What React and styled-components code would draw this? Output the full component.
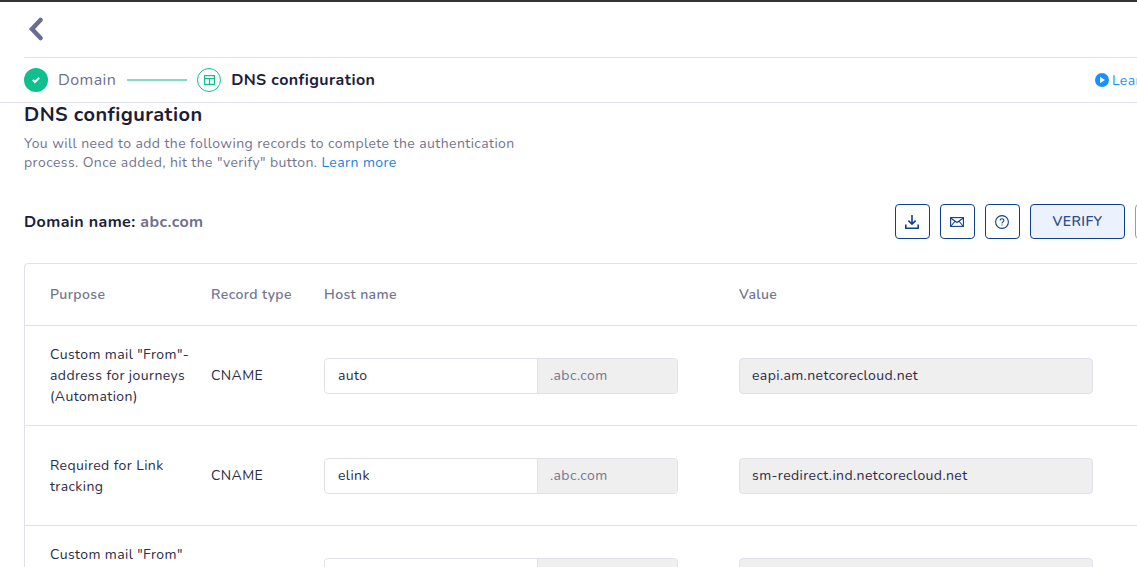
import React from "react"
import styled, { createGlobalStyle } from "styled-components"

const GlobalStyle = createGlobalStyle`
  html, body {
    margin: 0;
    padding: 0;
    height: 100%;
    overflow: hidden;
    background: #fff;
  }
  * { box-sizing: border-box; }
`

const rows = [
  {
    purpose: ['Custom mail "From"-', "address for journeys", "(Automation)"],
    host: "auto",
    value: "eapi.am.netcorecloud.net",
  },
  {
    purpose: ["Required for Link", "tracking"],
    host: "elink",
    value: "sm-redirect.ind.netcorecloud.net",
  },
  {
    purpose: ['Custom mail "From"', "address for campaigns", "(Marketing)"],
    host: "",
    value: "",
  },
]

export default function App() {
  return (
    <Page>
      <GlobalStyle />
      <TopBar>
        <BackIcon width="16" height="24" viewBox="0 0 16 24">
          <path d="M12.500 3 4 12l8.500 9" />
        </BackIcon>
      </TopBar>
      <Stepper>
        <Steps>
          <DoneDot>
            <svg width="10" height="8" viewBox="0 0 10 8">
              <path d="M1.800 4 3.900 6 8.200 1.800" fill="none" stroke="#fff" strokeWidth="2" />
            </svg>
          </DoneDot>
          <StepName $active={false}>Domain</StepName>
          <StepLine />
          <CurrentDot>
            <svg width="11" height="10" viewBox="0 0 11 10" fill="none" stroke="#0fc08e" strokeWidth="1.200">
              <rect x=".6" y=".6" width="9.800" height="8.800" />
              <path d="M.6 3.600h9.800M5.500 3.600v5.800" />
            </svg>
          </CurrentDot>
          <StepName $active>DNS configuration</StepName>
        </Steps>
        <LearnLink>
          <svg width="14" height="14" viewBox="0 0 14 14">
            <circle cx="7" cy="7" r="7" fill="#1a8fff" />
            <path d="M5.200 3.800 9.800 7l-4.600 3.200z" fill="#fff" />
          </svg>
          Learn more
        </LearnLink>
      </Stepper>
      <Content>
        <Title>DNS configuration</Title>
        <Intro>
          You will need to add the following records to complete the authentication
          <br />
          process. Once added, hit the "verify" button. <a>Learn more</a>
        </Intro>
        <DomainRow>
          <DomainName>
            Domain name: <span>abc.com</span>
          </DomainName>
          <Actions>
            <IconButton>
              <svg width="14" height="14" viewBox="0 0 14 14" fill="none" stroke="#0f3f8c" strokeWidth="1.600">
                <path d="M7 0v9M3.400 5.600 7 9.200l3.600-3.600M.8 9.500v3.700h12.400V9.500" />
              </svg>
            </IconButton>
            <IconButton>
              <svg width="14" height="10" viewBox="0 0 14 10" fill="none" stroke="#0f3f8c" strokeWidth="1.100">
                <rect x=".6" y=".6" width="12.800" height="8.800" />
                <path d="M.6 1 7 5.500 13.400 1M1 9l3.800-4.500M13 9 9.200 4.500" />
              </svg>
            </IconButton>
            <IconButton>
              <svg width="14" height="14" viewBox="0 0 14 14" fill="none" stroke="#0f3f8c" strokeWidth="1.100">
                <circle cx="7" cy="7" r="6.400" />
                <path d="M5.100 5.600c0-1.200.9-1.900 1.900-1.900s1.900.7 1.900 1.800c0 1.400-1.900 1.400-1.900 2.900" />
                <path d="M7 9.400v1.200" />
              </svg>
            </IconButton>
            <VerifyButton>VERIFY</VerifyButton>
            <GhostButton />
          </Actions>
        </DomainRow>
        <Table>
          <HeadRow>
            <HeadCell>Purpose</HeadCell>
            <HeadCell>Record type</HeadCell>
            <HeadCell>Host name</HeadCell>
            <HeadCell>Value</HeadCell>
          </HeadRow>
          {rows.map((row, i) => (
            <BodyRow key={i}>
              <Purpose>
                {row.purpose.map((line) => (
                  <div key={line}>{line}</div>
                ))}
              </Purpose>
              <Cell>CNAME</Cell>
              <HostField>
                <HostInput>{row.host}</HostInput>
                <HostSuffix>.abc.com</HostSuffix>
              </HostField>
              <ValueField>{row.value}</ValueField>
            </BodyRow>
          ))}
        </Table>
      </Content>
    </Page>
  )
}

const font = `"Nunito", "Noto Sans", "Open Sans", sans-serif`

const Page = styled.div`
  width: 1220px;
  height: 567px;
  overflow: hidden;
  border-top: 2px solid #333333;
  font-family: ${font};
  letter-spacing: 0.4px;
  color: #1c1d3a;
  background: #fff;
`

const TopBar = styled.div`
  height: 56px;
  margin-left: 24px;
  padding: 15px 0 0 4px;
  border-bottom: 1px solid #e1e1ec;
`

const BackIcon = styled.svg`
  display: block;
  fill: none;
  stroke: #6b6c93;
  stroke-width: 4.5;
  stroke-linecap: round;
`

const Stepper = styled.div`
  height: 45px;
  padding: 0 33px 0 24px;
  display: flex;
  align-items: center;
  justify-content: space-between;
  border-bottom: 1px solid #e1e1ec;
`

const Steps = styled.div`
  display: flex;
  align-items: center;
`

const DoneDot = styled.div`
  width: 24px;
  height: 24px;
  border-radius: 50%;
  background: #0fc08e;
  display: flex;
  align-items: center;
  justify-content: center;
`

const StepName = styled.span`
  margin-left: 10px;
  font-size: 16px;
  font-weight: ${(p) => (p.$active ? 700 : 400)};
  color: ${(p) => (p.$active ? "#1c1d3a" : "#6f7091")};
`

const StepLine = styled.div`
  width: 60px;
  height: 2px;
  margin: 0 10px 0 11px;
  background: #7fdcc0;
`

const CurrentDot = styled.div`
  width: 24px;
  height: 24px;
  border: 1px solid #0fc08e;
  border-radius: 50%;
  display: flex;
  align-items: center;
  justify-content: center;
`

const LearnLink = styled.div`
  display: flex;
  align-items: center;
  gap: 3px;
  font-size: 14px;
  color: #1a8fff;
`

const Content = styled.div`
  padding: 0 35px 0 24px;
`

const Title = styled.h1`
  margin: 0;
  font-size: 20px;
  line-height: 24px;
  font-weight: 700;
  color: #1c1d3a;
`

const Intro = styled.p`
  margin: 7px 0 0;
  font-size: 14px;
  line-height: 19px;
  letter-spacing: 0.42px;
  color: #73748f;
  & a {
    color: #1a7fe0;
  }
`

const DomainRow = styled.div`
  margin-top: 32px;
  height: 35px;
  display: flex;
  align-items: center;
  justify-content: space-between;
`

const DomainName = styled.div`
  font-size: 16px;
  font-weight: 700;
  & span {
    color: #6f7091;
  }
`

const Actions = styled.div`
  display: flex;
  gap: 10px;
`

const IconButton = styled.button`
  width: 35px;
  height: 35px;
  padding: 0 1px 0 0;
  background: #fff;
  border: 1px solid #0f3f8c;
  border-radius: 4px;
  display: flex;
  align-items: center;
  justify-content: center;
`

const VerifyButton = styled.button`
  width: 95px;
  height: 35px;
  padding: 0;
  background: #ebf1fd;
  border: 1px solid #0f3f8c;
  border-radius: 4px;
  font-family: ${font};
  font-size: 14px;
  font-weight: 600;
  letter-spacing: 0.4px;
  color: #2b4c8f;
`

const GhostButton = styled.button`
  width: 50px;
  height: 35px;
  background: #fff;
  border: 1px solid #8e9cc0;
  border-radius: 4px;
`

const Table = styled.div`
  margin-top: 24px;
  border: 1px solid #e1e1ec;
  border-radius: 4px;
`

const HeadRow = styled.div`
  height: 62px;
  padding-left: 25px;
  display: grid;
  grid-template-columns: 161px 113px 415px 1fr;
  align-items: center;
  border-bottom: 1px solid #e1e1ec;
`

const HeadCell = styled.div`
  font-size: 14px;
  font-weight: 600;
  color: #73748f;
`

const BodyRow = styled.div`
  height: 100px;
  padding-left: 25px;
  display: grid;
  grid-template-columns: 161px 113px 415px 1fr;
  align-items: center;
  border-bottom: 1px solid #e1e1ec;
`

const Purpose = styled.div`
  font-size: 14px;
  line-height: 21px;
  color: #2a2b45;
`

const Cell = styled.div`
  font-size: 14px;
  color: #2a2b45;
`

const HostField = styled.div`
  width: 354px;
  height: 36px;
  display: flex;
  border: 1px solid #e1e1ec;
  border-radius: 4px;
  font-size: 14px;
  overflow: hidden;
`

const HostInput = styled.div`
  flex: 1;
  padding-left: 13px;
  line-height: 34px;
  color: #2a2b45;
`

const HostSuffix = styled.div`
  width: 140px;
  padding-left: 12px;
  line-height: 34px;
  color: #73748f;
  background: #efefef;
  border-left: 1px solid #e1e1ec;
`

const ValueField = styled.div`
  width: 354px;
  height: 36px;
  padding-left: 12px;
  line-height: 34px;
  font-size: 14px;
  color: #2a2b45;
  background: #efefef;
  border: 1px solid #e1e1ec;
  border-radius: 4px;
`
